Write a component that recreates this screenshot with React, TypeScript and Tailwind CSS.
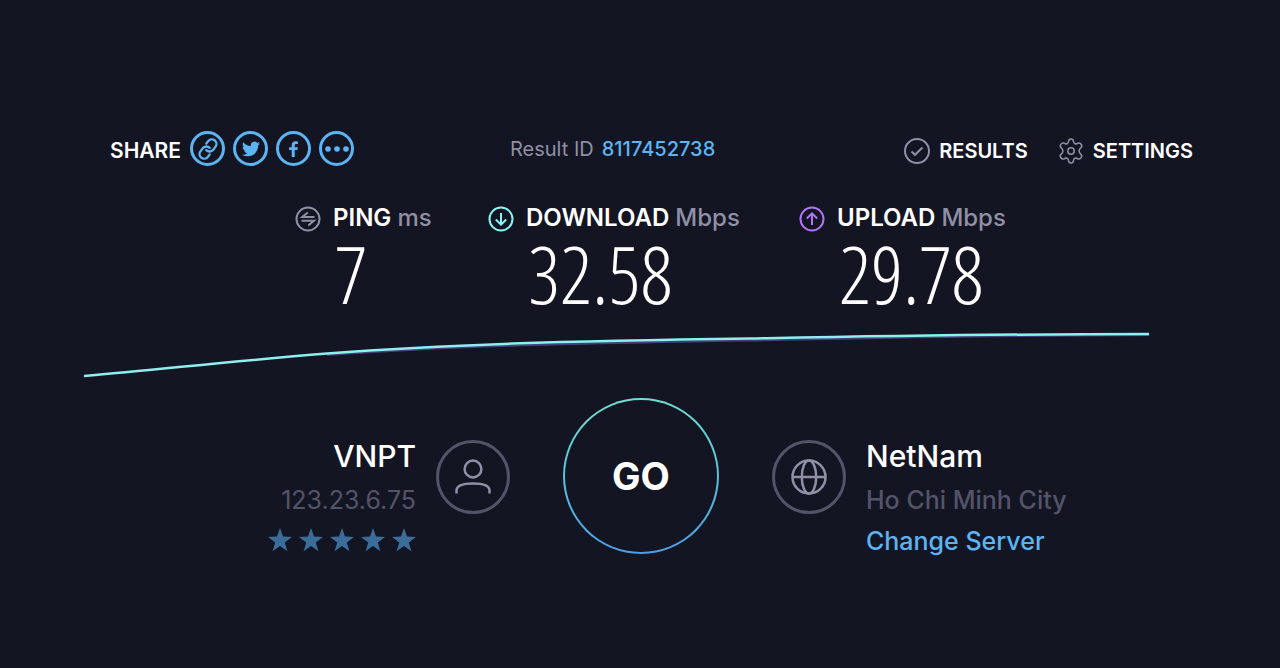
import type { ReactNode } from "react";

const STARS = [1, 2, 3, 4, 5];

interface MetricProps {
  icon: ReactNode;
  label: string;
  unit: string;
  value: string;
}

function Metric({ icon, label, unit, value }: MetricProps) {
  return (
    <div className="flex gap-3">
      <div className="pt-1">{icon}</div>
      <div>
        <h2 className="text-[24px] leading-8 font-semibold whitespace-nowrap">
          {label} <span className="text-[#8f90a6] font-medium">{unit}</span>
        </h2>
        <p className="pl-0.5 font-['Open_Sans_Condensed_Light','Roboto_Condensed',Roboto,sans-serif] font-light text-[80px] leading-[78px]">
          {value}
        </p>
      </div>
    </div>
  );
}

function ShareButton({ label, children }: { label: string; children: ReactNode }) {
  return (
    <button
      type="button"
      aria-label={label}
      className="size-[35px] rounded-full border-[3px] border-[#5db4f2] text-[#5db4f2] flex items-center justify-center cursor-pointer"
    >
      {children}
    </button>
  );
}

function ShareBar() {
  return (
    <div className="flex items-center gap-[9px]">
      <span className="pt-1 text-[21px] leading-7 font-semibold">SHARE</span>
      <div className="flex items-center gap-2">
        <ShareButton label="Copy link">
          <svg viewBox="0 0 24 24" className="size-[22px] shrink-0" fill="none" stroke="currentColor" strokeWidth="2.5" strokeLinecap="round">
            <g transform="rotate(-8 12 12)">
              <path d="M10 13a5 5 0 0 0 7.54.54l3-3a5 5 0 0 0-7.07-7.07l-2.500 2.500" />
              <path d="M14 11a5 5 0 0 0-7.54-.54l-3 3a5 5 0 0 0 7.07 7.07l2.500-2.500" />
            </g>
          </svg>
        </ShareButton>
        <ShareButton label="Share on Twitter">
          <svg viewBox="0 0 24 24" className="size-[18px] shrink-0" fill="currentColor">
            <path d="M23.95 4.57a10 10 0 0 1-2.82.77 4.96 4.96 0 0 0 2.16-2.72c-.95.55-2 .95-3.13 1.18a4.92 4.92 0 0 0-8.38 4.48C7.69 8.1 4.07 6.13 1.64 3.16a4.82 4.82 0 0 0-.67 2.48c0 1.71.87 3.21 2.19 4.1a4.9 4.9 0 0 1-2.23-.62v.06a4.92 4.92 0 0 0 3.95 4.83 5 5 0 0 1-2.21.08 4.94 4.94 0 0 0 4.6 3.42A9.87 9.87 0 0 1 0 19.54a13.99 13.99 0 0 0 7.55 2.21c9.05 0 14-7.5 14-13.98 0-.21 0-.42-.02-.63a9.94 9.94 0 0 0 2.42-2.57z" />
          </svg>
        </ShareButton>
        <ShareButton label="Share on Facebook">
          <svg viewBox="0 0 12 18" className="w-[11px] h-4 shrink-0" fill="currentColor">
            <path d="M4 18V10H1V7H4V4.6C4 1.8 5.700.3 8.300.3Q10 .3 11 .6V3.300H9.200C7.800 3.300 7.400 4 7.400 5V7H10.900L10.400 10H7.400V18Z" />
          </svg>
        </ShareButton>
        <ShareButton label="More">
          <svg viewBox="0 0 26 6" className="w-[26px] h-1.5 shrink-0" fill="currentColor">
            <circle cx="4" cy="3" r="2.8" />
            <circle cx="13" cy="3" r="2.8" />
            <circle cx="22" cy="3" r="2.8" />
          </svg>
        </ShareButton>
      </div>
    </div>
  );
}

function PingIcon() {
  return (
    <svg viewBox="0 0 26 26" className="size-[26px] text-[#8f90a6]" fill="none" stroke="currentColor" strokeWidth="2">
      <circle cx="13" cy="13" r="11.5" />
      <path d="M19.500 11H7.200L12.800 6.400M6.500 14.800H19L13.300 19.600" />
    </svg>
  );
}

function ArrowIcon({ up = false }: { up?: boolean }) {
  return (
    <svg
      viewBox="0 0 26 26"
      className={up ? "size-[26px] text-[#b174f5]" : "size-[26px] text-[#8cf4f0]"}
      fill="none"
      stroke="currentColor"
      strokeWidth="2"
    >
      <circle cx="13" cy="13" r="11.5" />
      <path d={up ? "M13 19V7.500M7.800 12.500L13 7.300L18.200 12.500" : "M13 7V18.500M7.800 13.500L13 18.700L18.200 13.500"} />
    </svg>
  );
}

function SpeedCurve() {
  return (
    <svg
      viewBox="0 0 1065 48"
      preserveAspectRatio="none"
      className="block w-full h-12"
      fill="none"
      aria-hidden="true"
    >
      <path
        d="M243 25C360 16.500 480 13.500 666 10.500C800 8 900 5.500 1065 5"
        stroke="#443f7c"
        strokeWidth="2"
        vectorEffect="non-scaling-stroke"
      />
      <path
        d="M0 46C80 39 150 31 243 23.500C360 14.500 480 11 666 8.500C800 6 900 4 1065 4"
        stroke="#8df0ee"
        strokeWidth="2.5"
        vectorEffect="non-scaling-stroke"
      />
    </svg>
  );
}

function GoButton() {
  return (
    <button
      type="button"
      className="size-[156px] rounded-full bg-linear-to-b from-[#6fe0cb] to-[#4c9fe8] p-0.5 cursor-pointer"
    >
      <span className="flex size-full items-center justify-center rounded-full bg-[#141523] text-[38px] font-bold">
        GO
      </span>
    </button>
  );
}

function RoundIcon({ children }: { children: ReactNode }) {
  return (
    <div className="mt-[42px] size-[74px] shrink-0 rounded-full border-3 border-[#53546a] text-[#8f90a6] flex items-center justify-center">
      {children}
    </div>
  );
}

export default function App() {
  return (
    <main className="min-h-screen bg-[#141523] text-white font-[Inter,'Liberation_Sans',sans-serif] pt-[131px] pb-12">
      {/* Top bar */}
      <header className="grid grid-cols-[400px_1fr_auto] items-center pl-[110px] pr-[87px]">
        <ShareBar />
        <p className="flex gap-2 text-[20px] text-[#8f90a6]">
          Result ID
          <a href="#result" className="font-medium text-[#5db4f2]">
            8117452738
          </a>
        </p>
        <nav className="flex items-center gap-[30px] pt-1 text-[20px] leading-7 font-semibold">
          <a href="#results" className="flex items-center gap-[9px]">
            <svg viewBox="0 0 26 26" className="size-[26px] text-[#8f90a6]" fill="none" stroke="currentColor" strokeWidth="2">
              <circle cx="13" cy="13" r="12" />
              <path d="M7.500 13.500L11 16.800L18.500 9.500" />
            </svg>
            RESULTS
          </a>
          <a href="#settings" className="flex items-center gap-[9px]">
            <svg viewBox="0 0 26 26" className="size-[26px] text-[#8f90a6]" fill="none" stroke="currentColor" strokeWidth="1.5" strokeLinejoin="round">
              <path d="M10.500 3.500Q10.700 1 13 1T15.500 3.500Q15.700 5.200 17 5.700T19.600 5.300Q22 4.300 23.300 6.500T22.700 9.900Q21.100 11.200 21.100 13T22.700 16.100Q24.500 17.400 23.300 19.500T19.600 20.700Q18.300 19.800 17 20.300T15.500 22.500Q15.300 25 13 25T10.500 22.500Q10.300 20.800 9 20.300T6.400 20.700Q4 21.700 2.700 19.500T3.300 16.100Q4.900 14.800 4.900 13T3.300 9.900Q1.500 8.600 2.700 6.500T6.400 5.300Q7.700 6.200 9 5.700T10.500 3.500Z" />
              <circle cx="13" cy="13" r="3.2" />
            </svg>
            SETTINGS
          </a>
        </nav>
      </header>

      {/* Measured values */}
      <section className="mt-9 grid grid-cols-[193px_311px_auto] justify-start pl-[295px]">
        <Metric icon={<PingIcon />} label="PING" unit="ms" value="7" />
        <Metric icon={<ArrowIcon />} label="DOWNLOAD" unit="Mbps" value="32.58" />
        <Metric icon={<ArrowIcon up />} label="UPLOAD" unit="Mbps" value="29.78" />
      </section>

      <div className="mt-[18px] pl-[84px] pr-[131px]">
        <SpeedCurve />
      </div>

      {/* Connection, start button and server */}
      <section className="mt-5 grid grid-cols-[1fr_auto_1fr] items-start gap-[53px] pl-0.5">
        <div className="flex justify-end gap-5">
          <div className="pt-[38px] text-right">
            <h3 className="text-[30px] leading-10 font-medium">VNPT</h3>
            <p className="pt-1 text-[25px] leading-10 text-[#53546a]">123.23.6.75</p>
            <div className="mt-2 flex gap-[7px] text-[#3a6d99]">
              {STARS.map((star) => (
                <svg key={star} viewBox="0 0 24 24" className="size-6" fill="currentColor">
                  <path d="M12 0L15 8.600L24 8.900L16.800 14.400L19.400 23.200L12 18L4.600 23.200L7.200 14.400L0 8.900L9 8.600Z" />
                </svg>
              ))}
            </div>
          </div>
          <RoundIcon>
            <svg viewBox="0 0 36 36" className="size-9" fill="none" stroke="currentColor" strokeWidth="2.5">
              <circle cx="18" cy="10" r="8.4" />
              <path d="M1.500 34.500v-3C1.500 27 8 24.500 18 24.500S34.500 27 34.500 31.500v3" />
            </svg>
          </RoundIcon>
        </div>
        <GoButton />
        <div className="flex gap-5">
          <RoundIcon>
            <svg viewBox="0 0 36 36" className="size-9" fill="none" stroke="currentColor" strokeWidth="2.5">
              <circle cx="18" cy="18" r="16.5" />
              <ellipse cx="18" cy="18" rx="7.2" ry="16.5" />
              <path d="M1.500 18h33" />
            </svg>
          </RoundIcon>
          <div className="pt-[38px]">
            <h3 className="text-[30px] leading-10 font-medium">NetNam</h3>
            <p className="pt-1 text-[25px] leading-10 font-medium text-[#53546a]">Ho Chi Minh City</p>
            <a href="#servers" className="block text-[25px] leading-[42px] font-medium text-[#5db4f2]">
              Change Server
            </a>
          </div>
        </div>
      </section>
    </main>
  );
}
